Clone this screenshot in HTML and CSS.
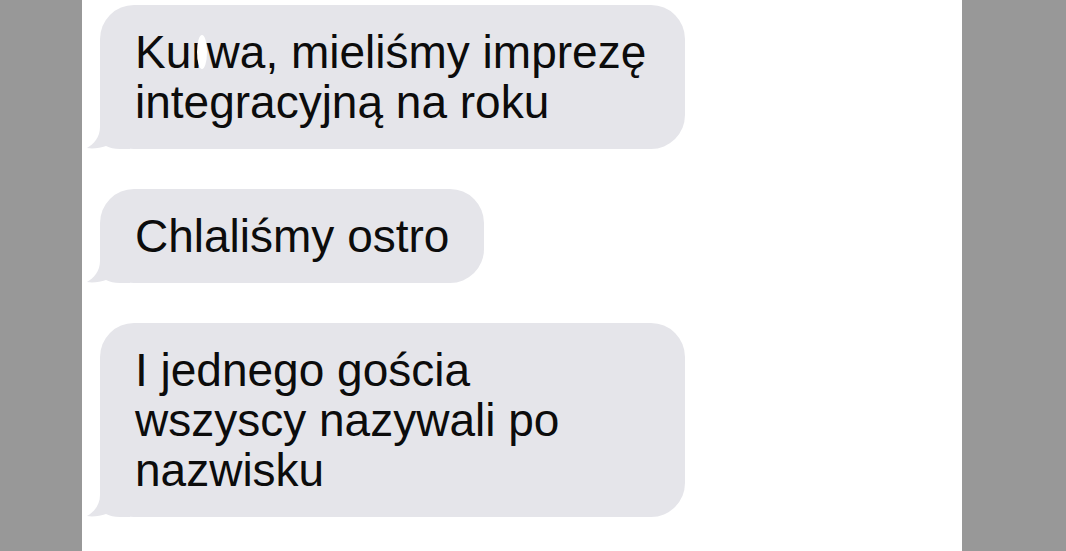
FILE: index.html
```html
<!DOCTYPE html>
<html lang="pl">
<head>
  <meta charset="UTF-8">
  <title>Wiadomości</title>
  <link rel="stylesheet" href="styles.css">
</head>
<body>
  <div class="page">
    <div class="thread">
      <div class="bubble wide">
        <p>Ku<span class="censor">r</span>wa, mieliśmy imprezę<br>integracyjną na roku</p>
        <svg class="tail" viewBox="0 0 44 34"><path d="M14 0 H44 V34 H34 C28 34 24 33 20 31 C14 33 7 34 1 33 C8 29 14 22 14 12 Z"/></svg>
      </div>
      <div class="bubble">
        <p>Chlaliśmy ostro</p>
        <svg class="tail" viewBox="0 0 44 34"><path d="M14 0 H44 V34 H34 C28 34 24 33 20 31 C14 33 7 34 1 33 C8 29 14 22 14 12 Z"/></svg>
      </div>
      <div class="bubble wide">
        <p>I jednego gościa<br>wszyscy nazywali po<br>nazwisku</p>
        <svg class="tail" viewBox="0 0 44 34"><path d="M14 0 H44 V34 H34 C28 34 24 33 20 31 C14 33 7 34 1 33 C8 29 14 22 14 12 Z"/></svg>
      </div>
    </div>
  </div>
</body>
</html>
```

FILE: styles.css
```css
body {
    margin: 0;
    padding: 0;
    background-color: #989898;
    font-family: 'Liberation Sans', Arial, sans-serif;
}

.page {
    width: 880px;
    height: 100vh;
    margin-left: 82px;
    background-color: #ffffff;
    overflow: hidden;
}

.thread {
    display: flex;
    flex-direction: column;
    align-items: flex-start;
    gap: 40px;
    padding: 5px 0 0 18px;
}

/* Message bubbles */
.bubble {
    position: relative;
    background-color: #e5e5ea;
    border-radius: 34px;
    padding: 22px 35px 22px 35px;
    color: #0c0c0c;
}

.bubble.wide {
    width: 585px;
    box-sizing: border-box;
}

.bubble p {
    margin: 0;
    font-size: 46px;
    line-height: 50px;
}

.tail {
    position: absolute;
    left: -14px;
    bottom: 0;
    width: 44px;
    height: 34px;
    fill: #e5e5ea;
}

/* White smudge over a letter */
.censor {
    position: relative;
}

.censor::after {
    content: '';
    position: absolute;
    left: 6px;
    top: 9px;
    width: 10px;
    height: 34px;
    background-color: #ffffff;
    border-radius: 50%;
}
```
